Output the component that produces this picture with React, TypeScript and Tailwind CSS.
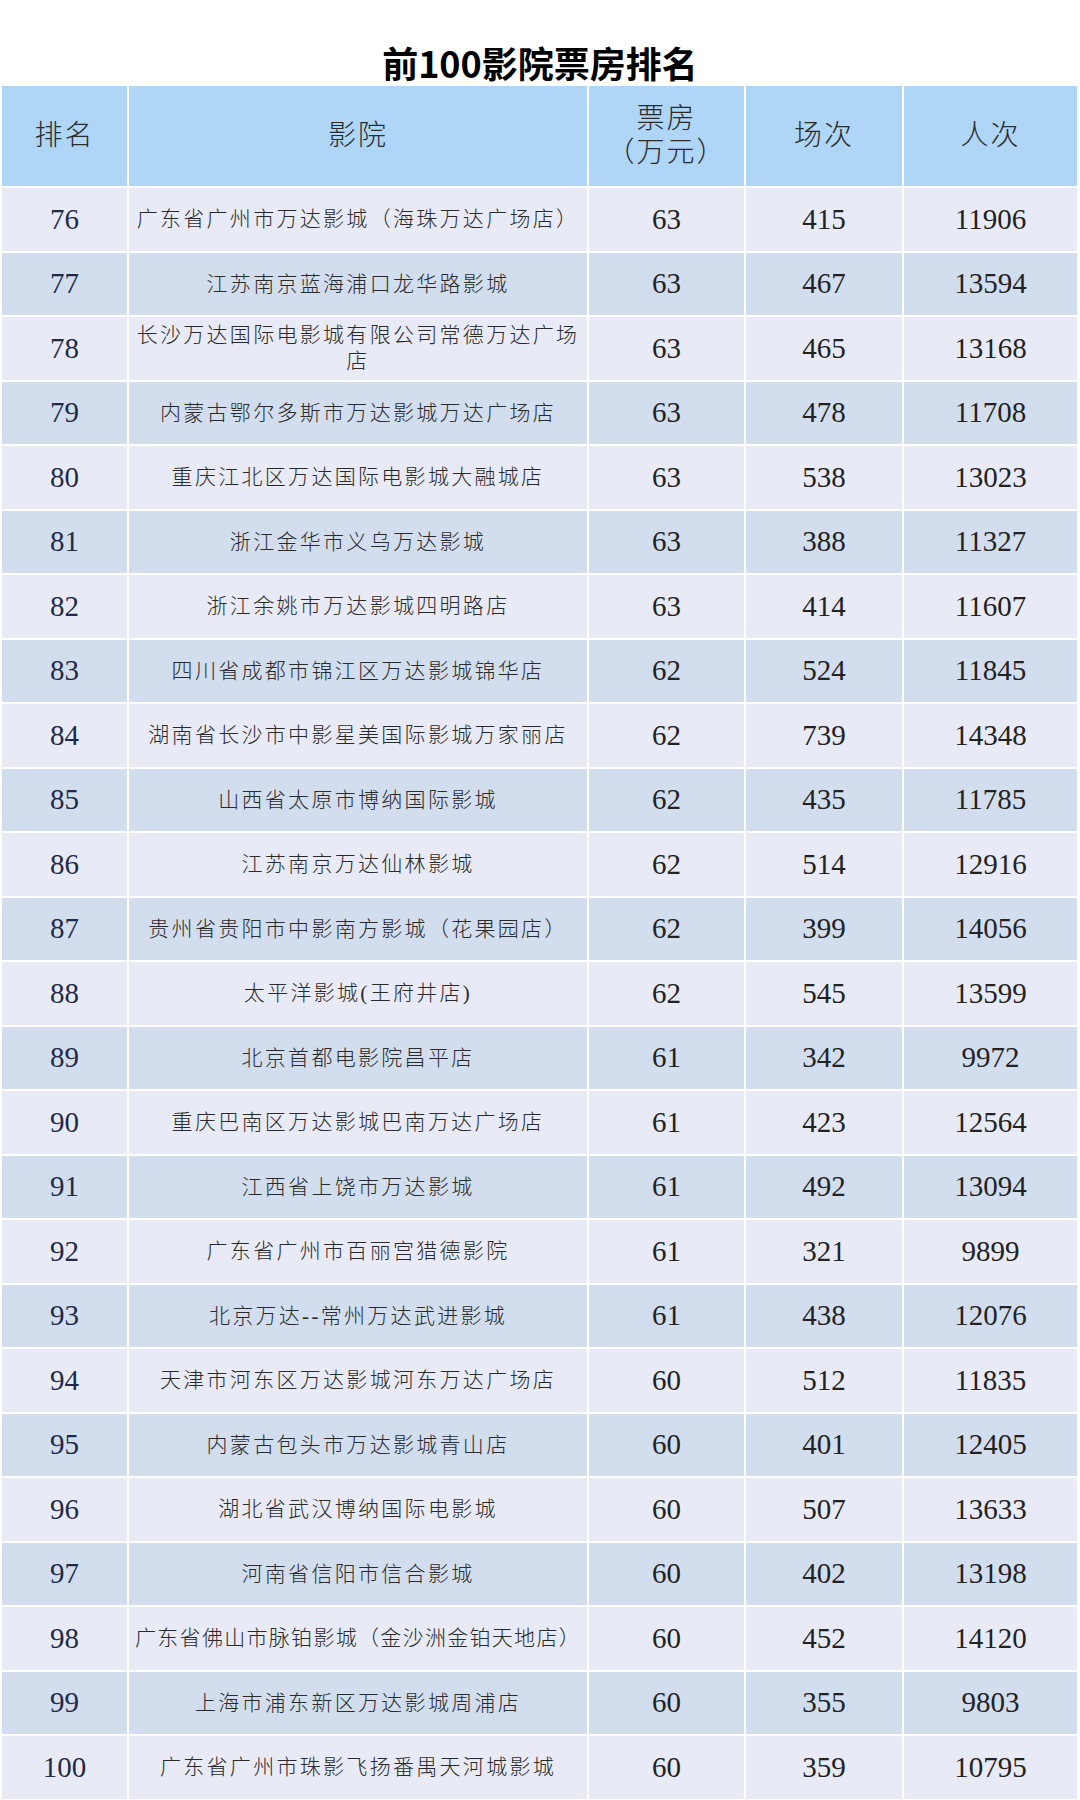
const rows: [number, string, number, number, number, boolean?][] = [
  [76, '广东省广州市万达影城（海珠万达广场店）', 63, 415, 11906],
  [77, '江苏南京蓝海浦口龙华路影城', 63, 467, 13594],
  [78, '长沙万达国际电影城有限公司常德万达广场店', 63, 465, 13168],
  [79, '内蒙古鄂尔多斯市万达影城万达广场店', 63, 478, 11708],
  [80, '重庆江北区万达国际电影城大融城店', 63, 538, 13023],
  [81, '浙江金华市义乌万达影城', 63, 388, 11327],
  [82, '浙江余姚市万达影城四明路店', 63, 414, 11607],
  [83, '四川省成都市锦江区万达影城锦华店', 62, 524, 11845],
  [84, '湖南省长沙市中影星美国际影城万家丽店', 62, 739, 14348],
  [85, '山西省太原市博纳国际影城', 62, 435, 11785],
  [86, '江苏南京万达仙林影城', 62, 514, 12916],
  [87, '贵州省贵阳市中影南方影城（花果园店）', 62, 399, 14056],
  [88, '太平洋影城(王府井店)', 62, 545, 13599],
  [89, '北京首都电影院昌平店', 61, 342, 9972],
  [90, '重庆巴南区万达影城巴南万达广场店', 61, 423, 12564],
  [91, '江西省上饶市万达影城', 61, 492, 13094],
  [92, '广东省广州市百丽宫猎德影院', 61, 321, 9899],
  [93, '北京万达--常州万达武进影城', 61, 438, 12076],
  [94, '天津市河东区万达影城河东万达广场店', 60, 512, 11835],
  [95, '内蒙古包头市万达影城青山店', 60, 401, 12405],
  [96, '湖北省武汉博纳国际电影城', 60, 507, 13633],
  [97, '河南省信阳市信合影城', 60, 402, 13198],
  [98, '广东省佛山市脉铂影城（金沙洲金铂天地店）', 60, 452, 14120, true],
  [99, '上海市浦东新区万达影城周浦店', 60, 355, 9803],
  [100, '广东省广州市珠影飞扬番禺天河城影城', 60, 359, 10795],
]

const serif = "font-['Liberation_Serif','Noto_Sans_CJK_SC',serif]"

function HeadCell({ children }: { children: React.ReactNode }) {
  return (
    <div className="flex h-[100px] flex-col items-center justify-center bg-[#afd5f7] text-[28px] font-light leading-[34px] tracking-[2px] text-[#2b2b2b]">
      {children}
    </div>
  )
}

export default function App() {
  return (
    <div className={`w-[1080px] bg-white ${serif}`}>
      <div className="flex h-[86px] items-end justify-center pb-[6px]">
        <h1 className="font-['Noto_Sans_CJK_SC',sans-serif] text-[36px] font-bold leading-none text-black">
          前100影院票房排名
        </h1>
      </div>
      <div className="grid grid-cols-[125px_458px_155px_156px_173px] gap-[2px] pl-[2px]">
        <HeadCell>排名</HeadCell>
        <HeadCell>影院</HeadCell>
        <HeadCell>
          <span>票房</span>
          <span>（万元）</span>
        </HeadCell>
        <HeadCell>场次</HeadCell>
        <HeadCell>人次</HeadCell>
        {rows.map(([rank, name, box, shows, people, tight], i) => {
          const bg = i % 2 === 0 ? 'bg-[#e8ebf5]' : 'bg-[#d2deee]'
          const cell = `flex h-[62.5px] items-center justify-center ${bg}`
          return (
            <div key={rank} className="contents">
              <div className={`${cell} text-[29px] text-[#1f2a48]`}>{rank}</div>
              <div
                className={`${cell} px-[4px] text-center text-[21px] font-light leading-[26px] text-[#2a2a2a] ${tight ? 'tracking-[1.3px] whitespace-nowrap' : 'tracking-[2.3px]'}`}
              >
                {name}
              </div>
              <div className={`${cell} text-[29px] text-[#222]`}>{box}</div>
              <div className={`${cell} text-[29px] text-[#222]`}>{shows}</div>
              <div className={`${cell} text-[29px] text-[#222]`}>{people}</div>
            </div>
          )
        })}
      </div>
    </div>
  )
}
